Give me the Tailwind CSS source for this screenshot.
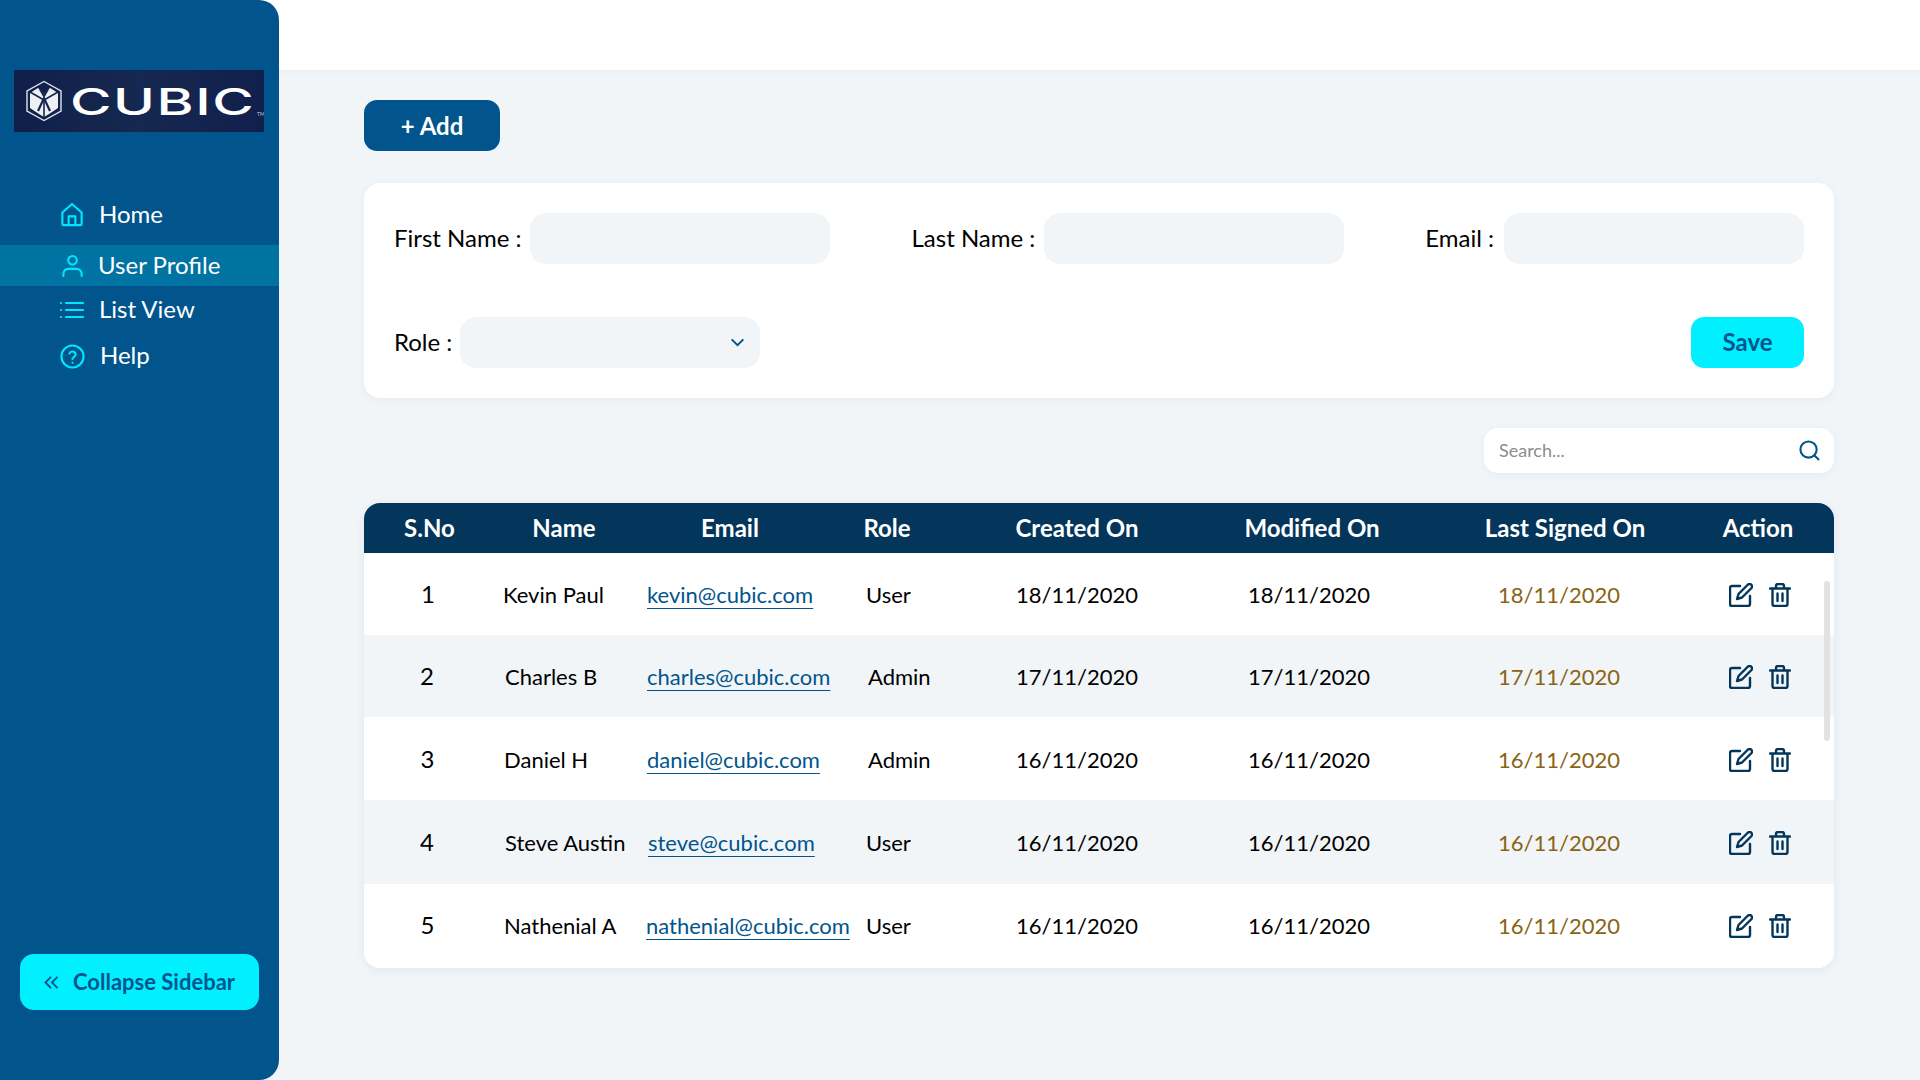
<!DOCTYPE html>
<html><head><meta charset="utf-8">
<script src="https://cdn.jsdelivr.net/npm/@tailwindcss/browser@4"></script>
</head>
<body class="m-0 bg-[#f1f5f8]">
<div class="flex w-[1920px] h-[1080px] overflow-hidden font-['Lato','Liberation_Sans',sans-serif] bg-[#f1f5f8] text-black">
  <aside class="w-[279px] h-full shrink-0 bg-[#01558c] rounded-r-[20px] flex flex-col relative z-10">
    <div class="mt-[70px] mx-[14px] h-[62px] w-[250px] bg-gradient-to-r from-[#101f4a] via-[#15284f] to-[#111f4c] flex items-center pl-[11px] gap-[7px] overflow-hidden relative">
      <svg viewBox="0 0 38 42" class="w-[38px] h-[42px] shrink-0" fill="none" stroke="#dfe3ea" stroke-width="1.4">
        <path d="M19 1.500 36 11V31L19 40.500 2 31V11Z"/>
        <path d="M5 13 L13 8 L19 14 L25 8 L33 13 L33 28 L24 34 L19 37 L14 34 L5 28Z" fill="#eef0f4" stroke="none"/>
        <path d="M5 12 L19 20 L33 12 M19 20 V38" stroke="#17264f" stroke-width="1.600"/>
        <path d="M13 31 L19 18 L25 31 M15 9 L19 16 L23 9" stroke="#17264f" stroke-width="2.200"/>
      </svg>
      <span class="text-white font-['Inter',sans-serif] font-medium text-[37px] leading-none tracking-[1px] origin-left scale-x-[1.53] whitespace-nowrap">CUBIC</span>
      <span class="absolute left-[243px] top-[42px] text-[5px] text-[#c8ccd6] leading-none">TM</span>
    </div>
    <nav class="mt-[62px] text-white text-[24px] leading-[36px]">
      <div class="h-[41px] flex items-center pl-[60px] gap-[15px]">
        <svg viewBox="0 0 24 26" class="w-[24px] h-[25px]" fill="none" stroke="#00e6ff" stroke-width="2.200" stroke-linejoin="round"><path d="M2 11 12 2l10 9v11.500a1.500 1.500 0 0 1-1.500 1.500h-17A1.500 1.500 0 0 1 2 22.500Z"/><path d="M8.500 24v-9h7v9"/></svg>
        <span class="mb-[2px]">Home</span>
      </div>
      <div class="h-[41px] mt-[10px] bg-[#0073a3] flex items-center pl-[62px] gap-[15px]">
        <svg viewBox="0 0 22 24" class="w-[21px] h-[23px]" fill="none" stroke="#00e6ff" stroke-width="2.200" stroke-linecap="round"><circle cx="11" cy="6.500" r="4.500"/><path d="M1.500 23v-2.500a5 5 0 0 1 5-5h9a5 5 0 0 1 5 5V23"/></svg>
        <span class="mb-[2px]">User Profile</span>
      </div>
      <div class="h-[41px] mt-[3px] flex items-center pl-[60px] gap-[15px]">
        <svg viewBox="0 0 24 18" class="w-[24px] h-[18px]" fill="none" stroke="#00e6ff" stroke-width="2.200" stroke-linecap="round"><path d="M6 2h17M6 9h17M6 16h17"/><path d="M1 2h.1M1 9h.1M1 16h.1"/></svg>
        <span class="mb-[1px]">List View</span>
      </div>
      <div class="h-[41px] mt-[5px] flex items-center pl-[60px] gap-[15px]">
        <svg viewBox="0 0 26 26" class="w-[25px] h-[25px] mt-[2px]" fill="none" stroke="#00e6ff" stroke-width="2.200" stroke-linecap="round"><circle cx="13" cy="13" r="11.500"/><path d="M9.800 10a3.300 3.300 0 0 1 6.400 1c0 2.200-3.200 2.800-3.200 4.500"/><path d="M13 19.500h.1"/></svg>
        <span class="mb-[2px]">Help</span>
      </div>
    </nav>
    <button class="mt-auto mb-[70px] mx-[20px] h-[56px] w-[239px] rounded-[14px] bg-[#00f0ff] text-[#01558c] text-[22px] font-bold flex items-center pl-[24px] gap-[14px]">
      <svg viewBox="0 0 16 14" class="w-[15px] h-[13px]" fill="none" stroke="#01558c" stroke-width="2"><path d="M7.500 1 1.500 7l6 6M14.500 1l-6 6 6 6"/></svg>
      <span class="mb-[2px]">Collapse Sidebar</span>
    </button>
  </aside>
  <main class="flex-1 min-w-0 flex flex-col">
    <div class="h-[70px] bg-white shadow-[0_1px_6px_rgba(0,0,0,0.04)] ml-[-20px]"></div>
    <div class="pl-[85px] pr-[85px]">
      <button class="mt-[30px] w-[136px] h-[51px] rounded-[13px] bg-[#01558c] text-white text-[24px] font-bold">+ Add</button>
      <section class="mt-[32px] h-[215px] w-[1470px] bg-white rounded-[16px] shadow-[0_2px_8px_rgba(0,60,100,0.05)] pl-[30px] pr-[30px] pt-[30px] text-[24px]">
        <div class="flex items-center h-[51px]">
          <span class="mb-[2px]">First Name :</span>
          <div class="ml-[8px] w-[300px] h-[51px] rounded-[16px] bg-[#f1f5f8]"></div>
          <span class="ml-[82px] mb-[2px]">Last Name :</span>
          <div class="ml-[9px] w-[300px] h-[51px] rounded-[16px] bg-[#f1f5f8]"></div>
          <span class="ml-[81px] mb-[2px]">Email :</span>
          <div class="ml-[10px] w-[300px] h-[51px] rounded-[16px] bg-[#f1f5f8]"></div>
        </div>
        <div class="flex items-center h-[51px] mt-[53px]">
          <span class="mb-[2px]">Role :</span>
          <div class="ml-[8px] w-[300px] h-[51px] rounded-[16px] bg-[#f1f5f8] flex items-center justify-end pr-[15px]">
            <svg viewBox="0 0 16 10" class="w-[15px] h-[9px]" fill="none" stroke="#01558c" stroke-width="2.200"><path d="M1.500 1.500 8 8l6.500-6.500"/></svg>
          </div>
          <button class="ml-auto w-[113px] h-[51px] rounded-[13px] bg-[#00f0ff] text-[#01558c] text-[24px] font-bold pb-[2px]">Save</button>
        </div>
      </section>
      <div class="mt-[30px] w-[1470px] flex justify-end">
        <div class="w-[350px] h-[45px] bg-white rounded-[14px] shadow-[0_2px_8px_rgba(0,60,100,0.05)] flex items-center pl-[15px] pr-[14px] justify-between">
          <span class="text-[18px] text-[#8c8c8c]">Search...</span>
          <svg viewBox="0 0 22 22" class="w-[21px] h-[21px]" fill="none" stroke="#01558c" stroke-width="2.200"><circle cx="10" cy="10" r="8.500"/><path d="m16 16 5 5"/></svg>
        </div>
      </div>
      <section class="mt-[30px] w-[1470px] rounded-[16px] bg-white shadow-[0_2px_10px_rgba(0,60,100,0.07)] overflow-hidden relative">
        <div class="h-[50px] bg-[#03365a] text-white text-[24px] font-bold grid grid-cols-[131px_138px_194px_120px_260px_210px_296px_90px_1fr] items-center text-center">
          <span>S.No</span><span>Name</span><span>Email</span><span>Role</span><span>Created On</span><span>Modified On</span><span>Last Signed On</span><span>Action</span><span></span>
        </div>
        <div class="text-[22px]">
          <div class="h-[82px] grid grid-cols-[139px_144px_219px_150px_232px_250px_231px_1fr] items-center bg-white">
            <span class="text-center pr-[11px] text-[24px]">1</span><span>Kevin Paul</span><a class="text-[#01558c] underline underline-offset-[5px] decoration-1">kevin@cubic.com</a><span>User</span><span>18/11/2020</span><span>18/11/2020</span><span class="text-[#8a6414]">18/11/2020</span>
            <span class="flex gap-[16px] items-center mt-[2px]"><svg viewBox="0 0 24 24" class="w-[24px] h-[24px]" fill="none" stroke="#03365a" stroke-width="2.400" stroke-linecap="round" stroke-linejoin="round"><path d="M11 3H3a2 2 0 0 0-2 2v16a2 2 0 0 0 2 2h16a2 2 0 0 0 2-2v-8"/><path d="M19 1.500a2.500 2.500 0 0 1 3.500 3.500L13 14.500l-5 1.500 1.500-5Z"/></svg><svg viewBox="0 0 22 24" class="w-[22px] h-[24px]" fill="none" stroke="#03365a" stroke-width="2.400" stroke-linecap="round" stroke-linejoin="round"><path d="M1 5.500h20M7 5.500V3a2 2 0 0 1 2-2h4a2 2 0 0 1 2 2v2.500M3.500 5.500V21a2 2 0 0 0 2 2h11a2 2 0 0 0 2-2V5.500M8.500 10.500v7.500M13.500 10.500v7.500"/></svg></span>
          </div>
          <div class="h-[82px] grid grid-cols-[141px_142px_221px_148px_232px_250px_231px_1fr] items-center bg-[#f1f5f8]">
            <span class="text-center pr-[15px] text-[24px]">2</span><span>Charles B</span><a class="text-[#01558c] underline underline-offset-[5px] decoration-1">charles@cubic.com</a><span>Admin</span><span>17/11/2020</span><span>17/11/2020</span><span class="text-[#8a6414]">17/11/2020</span>
            <span class="flex gap-[16px] items-center mt-[2px]"><svg viewBox="0 0 24 24" class="w-[24px] h-[24px]" fill="none" stroke="#03365a" stroke-width="2.400" stroke-linecap="round" stroke-linejoin="round"><path d="M11 3H3a2 2 0 0 0-2 2v16a2 2 0 0 0 2 2h16a2 2 0 0 0 2-2v-8"/><path d="M19 1.500a2.500 2.500 0 0 1 3.500 3.500L13 14.500l-5 1.500 1.500-5Z"/></svg><svg viewBox="0 0 22 24" class="w-[22px] h-[24px]" fill="none" stroke="#03365a" stroke-width="2.400" stroke-linecap="round" stroke-linejoin="round"><path d="M1 5.500h20M7 5.500V3a2 2 0 0 1 2-2h4a2 2 0 0 1 2 2v2.500M3.500 5.500V21a2 2 0 0 0 2 2h11a2 2 0 0 0 2-2V5.500M8.500 10.500v7.500M13.500 10.500v7.500"/></svg></span>
          </div>
          <div class="h-[83px] pt-[1px] grid grid-cols-[140px_143px_221px_148px_232px_250px_231px_1fr] items-center bg-white">
            <span class="text-center pr-[13px] text-[24px]">3</span><span>Daniel H</span><a class="text-[#01558c] underline underline-offset-[5px] decoration-1">daniel@cubic.com</a><span>Admin</span><span>16/11/2020</span><span>16/11/2020</span><span class="text-[#8a6414]">16/11/2020</span>
            <span class="flex gap-[16px] items-center mt-[2px]"><svg viewBox="0 0 24 24" class="w-[24px] h-[24px]" fill="none" stroke="#03365a" stroke-width="2.400" stroke-linecap="round" stroke-linejoin="round"><path d="M11 3H3a2 2 0 0 0-2 2v16a2 2 0 0 0 2 2h16a2 2 0 0 0 2-2v-8"/><path d="M19 1.500a2.500 2.500 0 0 1 3.500 3.500L13 14.500l-5 1.500 1.500-5Z"/></svg><svg viewBox="0 0 22 24" class="w-[22px] h-[24px]" fill="none" stroke="#03365a" stroke-width="2.400" stroke-linecap="round" stroke-linejoin="round"><path d="M1 5.500h20M7 5.500V3a2 2 0 0 1 2-2h4a2 2 0 0 1 2 2v2.500M3.500 5.500V21a2 2 0 0 0 2 2h11a2 2 0 0 0 2-2V5.500M8.500 10.500v7.500M13.500 10.500v7.500"/></svg></span>
          </div>
          <div class="h-[84px] grid grid-cols-[141px_143px_218px_150px_232px_250px_231px_1fr] items-center bg-[#f1f5f8]">
            <span class="text-center pr-[15px] text-[24px]">4</span><span>Steve Austin</span><a class="text-[#01558c] underline underline-offset-[5px] decoration-1">steve@cubic.com</a><span>User</span><span>16/11/2020</span><span>16/11/2020</span><span class="text-[#8a6414]">16/11/2020</span>
            <span class="flex gap-[16px] items-center mt-[2px]"><svg viewBox="0 0 24 24" class="w-[24px] h-[24px]" fill="none" stroke="#03365a" stroke-width="2.400" stroke-linecap="round" stroke-linejoin="round"><path d="M11 3H3a2 2 0 0 0-2 2v16a2 2 0 0 0 2 2h16a2 2 0 0 0 2-2v-8"/><path d="M19 1.500a2.500 2.500 0 0 1 3.500 3.500L13 14.500l-5 1.500 1.500-5Z"/></svg><svg viewBox="0 0 22 24" class="w-[22px] h-[24px]" fill="none" stroke="#03365a" stroke-width="2.400" stroke-linecap="round" stroke-linejoin="round"><path d="M1 5.500h20M7 5.500V3a2 2 0 0 1 2-2h4a2 2 0 0 1 2 2v2.500M3.500 5.500V21a2 2 0 0 0 2 2h11a2 2 0 0 0 2-2V5.500M8.500 10.500v7.500M13.500 10.500v7.500"/></svg></span>
          </div>
          <div class="h-[84px] pb-[2px] grid grid-cols-[140px_142px_220px_150px_232px_250px_231px_1fr] items-center bg-white">
            <span class="text-center pr-[13px] text-[24px]">5</span><span>Nathenial A</span><a class="text-[#01558c] underline underline-offset-[5px] decoration-1">nathenial@cubic.com</a><span>User</span><span>16/11/2020</span><span>16/11/2020</span><span class="text-[#8a6414]">16/11/2020</span>
            <span class="flex gap-[16px] items-center mt-[2px]"><svg viewBox="0 0 24 24" class="w-[24px] h-[24px]" fill="none" stroke="#03365a" stroke-width="2.400" stroke-linecap="round" stroke-linejoin="round"><path d="M11 3H3a2 2 0 0 0-2 2v16a2 2 0 0 0 2 2h16a2 2 0 0 0 2-2v-8"/><path d="M19 1.500a2.500 2.500 0 0 1 3.500 3.500L13 14.500l-5 1.500 1.500-5Z"/></svg><svg viewBox="0 0 22 24" class="w-[22px] h-[24px]" fill="none" stroke="#03365a" stroke-width="2.400" stroke-linecap="round" stroke-linejoin="round"><path d="M1 5.500h20M7 5.500V3a2 2 0 0 1 2-2h4a2 2 0 0 1 2 2v2.500M3.500 5.500V21a2 2 0 0 0 2 2h11a2 2 0 0 0 2-2V5.500M8.500 10.500v7.500M13.500 10.500v7.500"/></svg></span>
          </div>
        </div>
        <div class="absolute right-[4px] top-[78px] w-[6px] h-[160px] rounded-[3px] bg-[#e2e2e2]"></div>
      </section>
    </div>
  </main>
</div>
</body></html>
